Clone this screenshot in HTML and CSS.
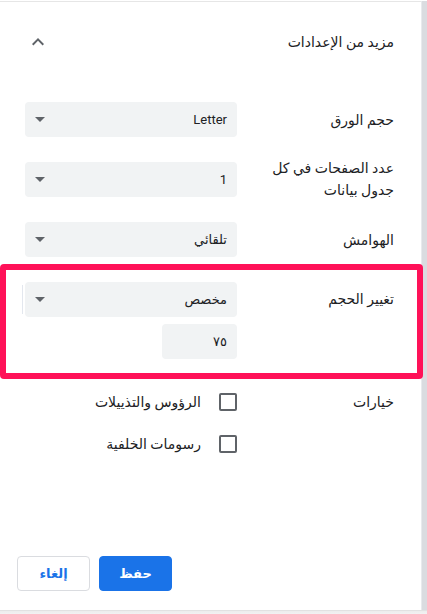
FILE: index.html
```html
<!DOCTYPE html>
<html lang="ar" dir="rtl">
<head>
<meta charset="utf-8">
<link rel="stylesheet" href="styles.css">
</head>
<body>
<div class="frame">
  <div class="panel">
    <div class="header">
      <span class="title">مزيد من الإعدادات</span>
      <svg class="chev" width="24" height="24" viewBox="0 0 24 24"><path d="M7.4 15.4 12 10.8l4.6 4.6L18 14l-6-6-6 6z" fill="#5f6368"/></svg>
    </div>
    <div class="form">
      <div class="label">حجم الورق</div>
      <div class="select"><span>Letter</span><i class="arrow"></i></div>

      <div class="label two">عدد الصفحات في كل جدول بيانات</div>
      <div class="select"><span>1</span><i class="arrow"></i></div>

      <div class="label">الهوامش</div>
      <div class="select"><span>تلقائي</span><i class="arrow"></i></div>

      <div class="label top">تغيير الحجم</div>
      <div class="stack">
        <div class="select focus"><span>مخصص</span><i class="arrow"></i></div>
        <div class="input">٧٥</div>
      </div>

      <div class="label top opt">خيارات</div>
      <div class="checks">
        <label class="check"><span class="box"></span><span>الرؤوس والتذييلات</span></label>
        <label class="check"><span class="box"></span><span>رسومات الخلفية</span></label>
      </div>
    </div>
    <div class="footer">
      <button class="btn primary">حفظ</button>
      <button class="btn">إلغاء</button>
    </div>
    <div class="highlight"></div>
  </div>
  <div class="track"></div>
</div>
<div class="bottom"></div>
</body>
</html>
```
FILE: styles.css
```css
html, body {
  margin: 0;
  padding: 0;
  background: #fff;
}
body {
  width: 427px;
  height: 614px;
  overflow: hidden;
  font-family: Roboto, "DejaVu Sans", sans-serif;
  font-size: 14px;
  color: #202124;
}
.frame {
  direction: ltr;
  display: flex;
  height: 609px;
  border-top: 1px solid #fff;
}
.panel {
  direction: rtl;
  position: relative;
  width: 421px;
  box-sizing: border-box;
  border-top: 1px solid #e6e6e6;
  display: flex;
  flex-direction: column;
}
.track {
  width: 6px;
  background: #dadce0;
  border-left: 1px solid #e8eaed;
  box-sizing: border-box;
}
.bottom {
  height: 5px;
  background: linear-gradient(#dcdcdc, #eeeeee 30%, #f4f4f4);
}
.header {
  display: flex;
  justify-content: space-between;
  align-items: center;
  padding: 28px 27px 0 26px;
  height: 24px;
}
.title {
  line-height: 20px;
}
.chev { display: block; }
.form {
  display: grid;
  grid-template-columns: 125px 212px;
  column-gap: 32px;
  row-gap: 25px;
  padding: 48px 27px 0 25px;
  align-items: center;
}
.label {
  line-height: 22px;
}
.label.two {
  margin: -5px 0 -4px;
}
.label.top {
  align-self: start;
  line-height: 35px;
}
.label.opt {
  line-height: 36px;
}
.select {
  height: 35px;
  background: #f1f3f4;
  border-radius: 4px;
  display: flex;
  align-items: center;
  justify-content: space-between;
  padding: 0 10px 0 10px;
  box-sizing: border-box;
  font-size: 13px;
  position: relative;
}
.select.focus::after {
  content: "";
  position: absolute;
  left: -3px;
  top: 3px;
  bottom: 3px;
  width: 1px;
  background: #e3e7ee;
}
.arrow {
  width: 0;
  height: 0;
  border-left: 5px solid transparent;
  border-right: 5px solid transparent;
  border-top: 5px solid #5f6368;
}
.stack {
  display: flex;
  flex-direction: column;
  gap: 7px;
}
.input {
  align-self: flex-start;
  width: 75px;
  height: 35px;
  background: #f1f3f4;
  border-radius: 4px;
  box-sizing: border-box;
  padding: 0 10px;
  display: flex;
  align-items: center;
  font-size: 13px;
}
.checks {
  display: flex;
  flex-direction: column;
  gap: 6px;
  align-self: start;
}
.check {
  display: flex;
  align-items: center;
  gap: 18px;
  height: 36px;
}
.box {
  width: 18px;
  height: 18px;
  box-sizing: border-box;
  border: 2px solid #5f6368;
  border-radius: 2px;
}
.footer {
  margin-top: auto;
  display: flex;
  justify-content: flex-end;
  gap: 9px;
  padding: 0 0 19px 17px;
}
.btn {
  width: 73px;
  height: 35px;
  border-radius: 4px;
  border: 1px solid #dadce0;
  background: #fff;
  color: #1a73e8;
  font-family: inherit;
  font-size: 13px;
  font-weight: bold;
  padding: 0;
}
.btn.primary {
  background: #1a73e8;
  border-color: #1a73e8;
  color: #fff;
}
.highlight {
  position: absolute;
  left: 0;
  top: 262px;
  width: 423px;
  height: 115px;
  box-sizing: border-box;
  border: 6px solid #ff1158;
  border-radius: 4px;
  pointer-events: none;
}
```
